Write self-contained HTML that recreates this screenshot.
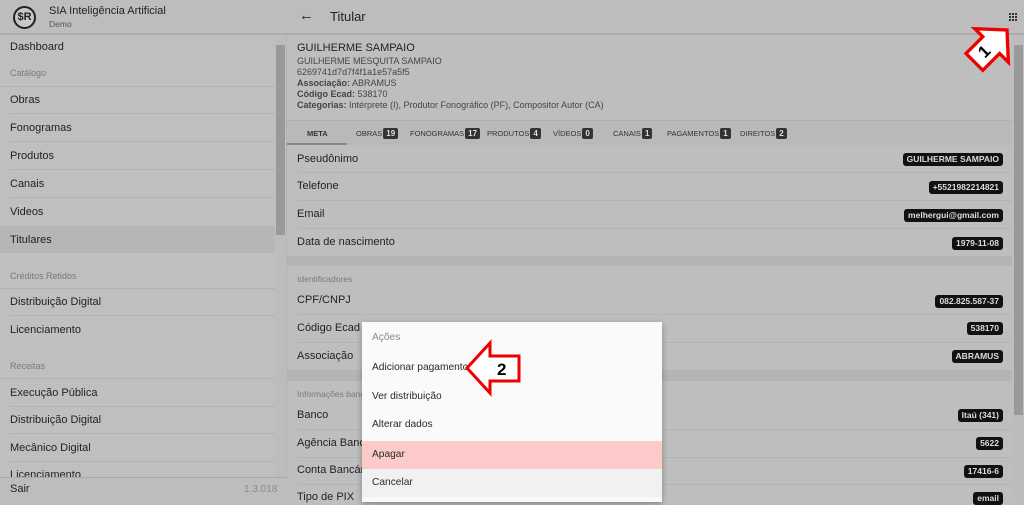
<!DOCTYPE html>
<html><head><meta charset="utf-8">
<style>
*{box-sizing:border-box;margin:0;padding:0}
body{width:1024px;height:502px;overflow:hidden;background:#bebebe;font-family:"Liberation Sans",sans-serif;color:#262626;position:relative}
.abs{position:absolute;white-space:nowrap}
.side{position:absolute;left:0;top:0;width:287px;height:502px;background:#bfbfbf;border-right:1px solid #b3b3b3}
.sh{position:absolute;left:0;top:0;width:287px;height:35px;border-bottom:2px solid #acacac;background:#bdbdbd}
.it{position:absolute;left:10px;font-size:11px;color:#222}
.lab{position:absolute;left:10px;font-size:9px;color:#7a7a7a}
.sep{position:absolute;left:10px;width:265px;height:1px;background:#b2b2b2}
.sepf{position:absolute;left:0;width:275px;height:1px;background:#b2b2b2}
.main{position:absolute;left:287px;top:0;width:737px;height:502px}
.row{position:absolute;left:10px;font-size:11px;color:#222}
.rl{position:absolute;left:287px;width:725px;height:1px;background:#b4b4b4}
.band{position:absolute;left:287px;width:725px;background:#b4b4b4}
.badge{position:absolute;right:21px;background:#111;color:#ddd;font-weight:bold;font-size:8.5px;padding:2px 4px;border-radius:3px;line-height:9px}
.tab{position:absolute;top:128px;font-size:7.5px;color:#333}
.tb{display:inline-block;background:#333;color:#ddd;font-weight:bold;font-size:8px;padding:1px 3px;border-radius:2px;margin-left:1px}
.menu{position:absolute;left:362px;top:322px;width:300px;height:180px;background:#fafafa;box-shadow:0 2px 6px rgba(0,0,0,.3)}
.mi{position:absolute;left:0;width:300px;height:28px;font-size:10.2px;color:#2a2a2a;padding-left:10px;line-height:28px}
</style></head><body>
<div class="side">
 <div class="sh">
  <div class="abs" style="left:13px;top:6px;width:23px;height:23px;border:2px solid #222;border-radius:50%;font-weight:bold;font-size:11px;line-height:19px;text-align:center;color:#222;background:#c8c8c8">$R</div>
  <div class="abs" style="left:49px;top:5px;font-size:11px;color:#222">SIA Inteligência Artificial</div>
  <div class="abs" style="left:49px;top:19px;font-size:8.5px;color:#555">Demo</div>
 </div>
 <div class="it" style="top:41px">Dashboard</div>
 <div class="lab" style="top:68px">Catálogo</div>
 <div class="sepf" style="top:86px"></div>
 <div class="it" style="top:94px">Obras</div>
 <div class="sep" style="top:113px"></div>
 <div class="it" style="top:122px">Fonogramas</div>
 <div class="sep" style="top:141px"></div>
 <div class="it" style="top:150px">Produtos</div>
 <div class="sep" style="top:169px"></div>
 <div class="it" style="top:178px">Canais</div>
 <div class="sep" style="top:197px"></div>
 <div class="it" style="top:206px">Videos</div>
 <div class="abs" style="left:0;top:226px;width:275px;height:27px;background:#b6b6b6"></div>
 <div class="it" style="top:234px">Titulares</div>
 <div class="lab" style="top:271px">Créditos Retidos</div>
 <div class="sepf" style="top:288px"></div>
 <div class="it" style="top:296px">Distribuição Digital</div>
 <div class="sep" style="top:315px"></div>
 <div class="it" style="top:324px">Licenciamento</div>
 <div class="lab" style="top:361px">Receitas</div>
 <div class="sepf" style="top:378px"></div>
 <div class="it" style="top:387px">Execução Pública</div>
 <div class="sep" style="top:406px"></div>
 <div class="it" style="top:414px">Distribuição Digital</div>
 <div class="sep" style="top:433px"></div>
 <div class="it" style="top:442px">Mecânico Digital</div>
 <div class="sep" style="top:461px"></div>
 <div class="it" style="top:469px">Licenciamento</div>
 <div class="abs" style="left:0;top:477px;width:287px;height:25px;background:#bdbdbd;border-top:1px solid #aaa"></div>
 <div class="it" style="top:483px">Sair</div>
 <div class="abs" style="left:244px;top:484px;font-size:10px;color:#8a8a8a">1.3.018</div>
 <div class="abs" style="left:276px;top:37px;width:9px;height:440px;background:#bcbcbc"></div>
 <div class="abs" style="left:276px;top:45px;width:9px;height:190px;background:#999"></div>
</div>

<div class="abs" style="left:287px;top:0;width:737px;height:35px;border-bottom:2px solid #acacac;background:#bdbdbd"></div>
<div class="abs" style="left:299px;top:7px;font-size:15px;color:#222">←</div>
<div class="abs" style="left:330px;top:9px;font-size:13px;color:#222">Titular</div>
<svg class="abs" style="left:1009px;top:13px" width="8" height="8"><g fill="#333"><rect x="0" y="0" width="2" height="2"/><rect x="3" y="0" width="2" height="2"/><rect x="6" y="0" width="2" height="2"/><rect x="0" y="3" width="2" height="2"/><rect x="3" y="3" width="2" height="2"/><rect x="6" y="3" width="2" height="2"/><rect x="0" y="6" width="2" height="2"/><rect x="3" y="6" width="2" height="2"/><rect x="6" y="6" width="2" height="2"/></g></svg>

<div class="abs" style="left:297px;top:42px;font-size:11px;color:#222">GUILHERME SAMPAIO</div>
<div class="abs" style="left:297px;top:56px;font-size:9px;color:#444">GUILHERME MESQUITA SAMPAIO</div>
<div class="abs" style="left:297px;top:67px;font-size:9px;color:#444">6269741d7d7f4f1a1e57a5f5</div>
<div class="abs" style="left:297px;top:78px;font-size:9px;color:#444"><b>Associação:</b> ABRAMUS</div>
<div class="abs" style="left:297px;top:89px;font-size:9px;color:#444"><b>Código Ecad:</b> 538170</div>
<div class="abs" style="left:297px;top:100px;font-size:9px;color:#444"><b>Categorias:</b> Intérprete (I), Produtor Fonográfico (PF), Compositor Autor (CA)</div>

<div class="band" style="top:120px;height:25px;background:#b9b9b9;border-top:1px solid #b0b0b0"></div>
<div class="abs" style="left:287px;top:143px;width:60px;height:2px;background:#888"></div>
<div class="tab" style="left:307px;font-weight:bold;top:129px">META</div>
<div class="tab" style="left:356px">OBRAS<span class="tb">19</span></div>
<div class="tab" style="left:410px">FONOGRAMAS<span class="tb">17</span></div>
<div class="tab" style="left:487px">PRODUTOS<span class="tb">4</span></div>
<div class="tab" style="left:553px">VÍDEOS<span class="tb">0</span></div>
<div class="tab" style="left:613px">CANAIS<span class="tb">1</span></div>
<div class="tab" style="left:667px">PAGAMENTOS<span class="tb">1</span></div>
<div class="tab" style="left:740px">DIREITOS<span class="tb">2</span></div>

<div class="main">
 <div class="row" style="top:153px">Pseudônimo</div>
 <div class="row" style="top:180px">Telefone</div>
 <div class="row" style="top:208px">Email</div>
 <div class="row" style="top:236px">Data de nascimento</div>
 <div class="abs" style="left:10px;top:274px;font-size:8.5px;color:#7a7a7a">Identificadores</div>
 <div class="row" style="top:294px">CPF/CNPJ</div>
 <div class="row" style="top:322px">Código Ecad</div>
 <div class="row" style="top:350px">Associação</div>
 <div class="abs" style="left:10px;top:389px;font-size:8.5px;color:#7a7a7a">Informações bancárias</div>
 <div class="row" style="top:409px">Banco</div>
 <div class="row" style="top:437px">Agência Bancária</div>
 <div class="row" style="top:464px">Conta Bancária</div>
 <div class="row" style="top:491px">Tipo de PIX</div>
</div>
<div class="rl" style="left:297px;width:715px;top:172px"></div>
<div class="rl" style="left:297px;width:715px;top:200px"></div>
<div class="rl" style="left:297px;width:715px;top:228px"></div>
<div class="band" style="top:256px;height:10px"></div>
<div class="rl" style="left:297px;width:715px;top:314px"></div>
<div class="rl" style="left:297px;width:715px;top:342px"></div>
<div class="band" style="top:370px;height:11px"></div>
<div class="rl" style="left:297px;width:715px;top:429px"></div>
<div class="rl" style="left:297px;width:715px;top:457px"></div>
<div class="rl" style="left:297px;width:715px;top:484px"></div>

<div class="badge" style="top:153px">GUILHERME SAMPAIO</div>
<div class="badge" style="top:181px">+5521982214821</div>
<div class="badge" style="top:209px">melhergui@gmail.com</div>
<div class="badge" style="top:237px">1979-11-08</div>
<div class="badge" style="top:295px">082.825.587-37</div>
<div class="badge" style="top:322px">538170</div>
<div class="badge" style="top:350px">ABRAMUS</div>
<div class="badge" style="top:409px">Itaú (341)</div>
<div class="badge" style="top:437px">5622</div>
<div class="badge" style="top:465px">17416-6</div>
<div class="badge" style="top:492px">email</div>

<div class="abs" style="left:1013px;top:37px;width:10px;height:465px;background:#bcbcbc"></div>
<div class="abs" style="left:1014px;top:45px;width:9px;height:370px;background:#9a9a9a"></div>

<div class="menu">
 <div class="mi" style="top:2px;color:#888">Ações</div>
 <div class="mi" style="top:32px">Adicionar pagamento</div>
 <div class="mi" style="top:61px">Ver distribuição</div>
 <div class="mi" style="top:89px">Alterar dados</div>
 <div class="mi" style="top:119px;background:#fdcaca">Apagar</div>
 <div class="mi" style="top:147px;background:#f1f1f1">Cancelar</div>
</div>

<svg class="abs" style="left:0;top:0" width="1024" height="502">
 <g transform="translate(467,368)">
  <polygon points="0,0 23,-25 23,-12 52,-12 52,13 23,13 23,25" fill="#fff" stroke="#e00" stroke-width="3" stroke-linejoin="miter"/>
  <text x="30" y="7" font-family="Liberation Sans" font-weight="bold" font-size="17" fill="#000">2</text>
 </g>
 <g transform="translate(1007,30) rotate(135) scale(0.95)">
  <polygon points="0,0 23,-25 23,-12 48,-12 48,13 23,13 23,25" fill="#fff" stroke="#e00" stroke-width="3.5"/>
  <text x="28" y="7" font-family="Liberation Sans" font-weight="bold" font-size="18" fill="#000" transform="rotate(180 33 1)">1</text>
 </g>
</svg>
</body></html>
